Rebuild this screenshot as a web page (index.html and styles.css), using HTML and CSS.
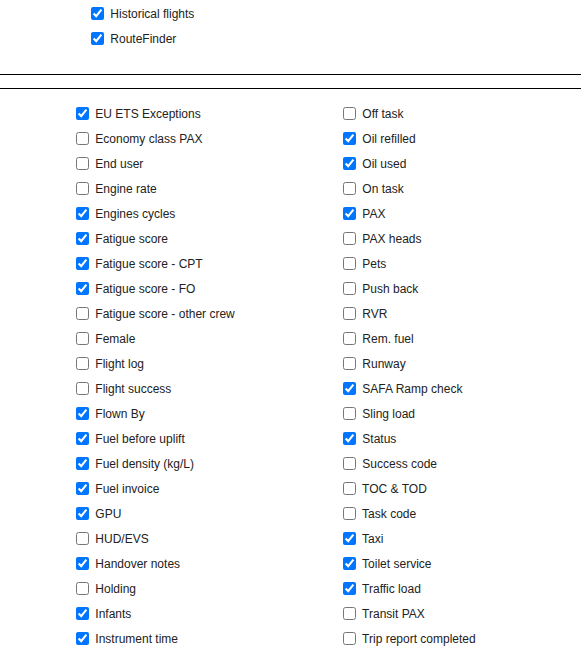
FILE: index.html
```html
<!DOCTYPE html>
<html lang="en">
<head>
    <meta charset="UTF-8">
    <title>Columns</title>
    <link rel="stylesheet" href="styles.css">
</head>
<body>
<div class="source-list">
    <label class="check"><input type="checkbox" checked> Historical flights</label>
    <label class="check"><input type="checkbox" checked> RouteFinder</label>
</div>

<div class="divider"></div>

<div class="field-grid">
    <div class="field-col">
        <label class="check"><input type="checkbox" checked> EU ETS Exceptions</label>
        <label class="check"><input type="checkbox"> Economy class PAX</label>
        <label class="check"><input type="checkbox"> End user</label>
        <label class="check"><input type="checkbox"> Engine rate</label>
        <label class="check"><input type="checkbox" checked> Engines cycles</label>
        <label class="check"><input type="checkbox" checked> Fatigue score</label>
        <label class="check"><input type="checkbox" checked> Fatigue score - CPT</label>
        <label class="check"><input type="checkbox" checked> Fatigue score - FO</label>
        <label class="check"><input type="checkbox"> Fatigue score - other crew</label>
        <label class="check"><input type="checkbox"> Female</label>
        <label class="check"><input type="checkbox"> Flight log</label>
        <label class="check"><input type="checkbox"> Flight success</label>
        <label class="check"><input type="checkbox" checked> Flown By</label>
        <label class="check"><input type="checkbox" checked> Fuel before uplift</label>
        <label class="check"><input type="checkbox" checked> Fuel density (kg/L)</label>
        <label class="check"><input type="checkbox" checked> Fuel invoice</label>
        <label class="check"><input type="checkbox" checked> GPU</label>
        <label class="check"><input type="checkbox"> HUD/EVS</label>
        <label class="check"><input type="checkbox" checked> Handover notes</label>
        <label class="check"><input type="checkbox"> Holding</label>
        <label class="check"><input type="checkbox" checked> Infants</label>
        <label class="check"><input type="checkbox" checked> Instrument time</label>
        <label class="check"><input type="checkbox"> Landing</label>
    </div>
    <div class="field-col">
        <label class="check"><input type="checkbox"> Off task</label>
        <label class="check"><input type="checkbox" checked> Oil refilled</label>
        <label class="check"><input type="checkbox" checked> Oil used</label>
        <label class="check"><input type="checkbox"> On task</label>
        <label class="check"><input type="checkbox" checked> PAX</label>
        <label class="check"><input type="checkbox"> PAX heads</label>
        <label class="check"><input type="checkbox"> Pets</label>
        <label class="check"><input type="checkbox"> Push back</label>
        <label class="check"><input type="checkbox"> RVR</label>
        <label class="check"><input type="checkbox"> Rem. fuel</label>
        <label class="check"><input type="checkbox"> Runway</label>
        <label class="check"><input type="checkbox" checked> SAFA Ramp check</label>
        <label class="check"><input type="checkbox"> Sling load</label>
        <label class="check"><input type="checkbox" checked> Status</label>
        <label class="check"><input type="checkbox"> Success code</label>
        <label class="check"><input type="checkbox"> TOC &amp; TOD</label>
        <label class="check"><input type="checkbox"> Task code</label>
        <label class="check"><input type="checkbox" checked> Taxi</label>
        <label class="check"><input type="checkbox" checked> Toilet service</label>
        <label class="check"><input type="checkbox" checked> Traffic load</label>
        <label class="check"><input type="checkbox"> Transit PAX</label>
        <label class="check"><input type="checkbox"> Trip report completed</label>
        <label class="check"><input type="checkbox"> Weather</label>
    </div>
</div>
</body>
</html>
```

FILE: styles.css
```css
body {
    margin: 0;
    padding-top: 1px;
    font-family: "Liberation Sans", Arial, sans-serif;
    font-size: 12px;
    color: #222;
}

.check {
    display: flex;
    align-items: center;
    height: 25px;
    white-space: pre;
}

.check input {
    margin: 0 3px 0 4px;
}

.source-list {
    padding-left: 87px;
    padding-bottom: 23px;
}

.divider {
    height: 13px;
    border-top: 1px solid #000;
    border-bottom: 1px solid #000;
}

.field-grid {
    display: grid;
    grid-template-columns: 267px 267px;
    padding: 12px 0 0 72px;
}

.field-col {
    display: flex;
    flex-direction: column;
}
```
